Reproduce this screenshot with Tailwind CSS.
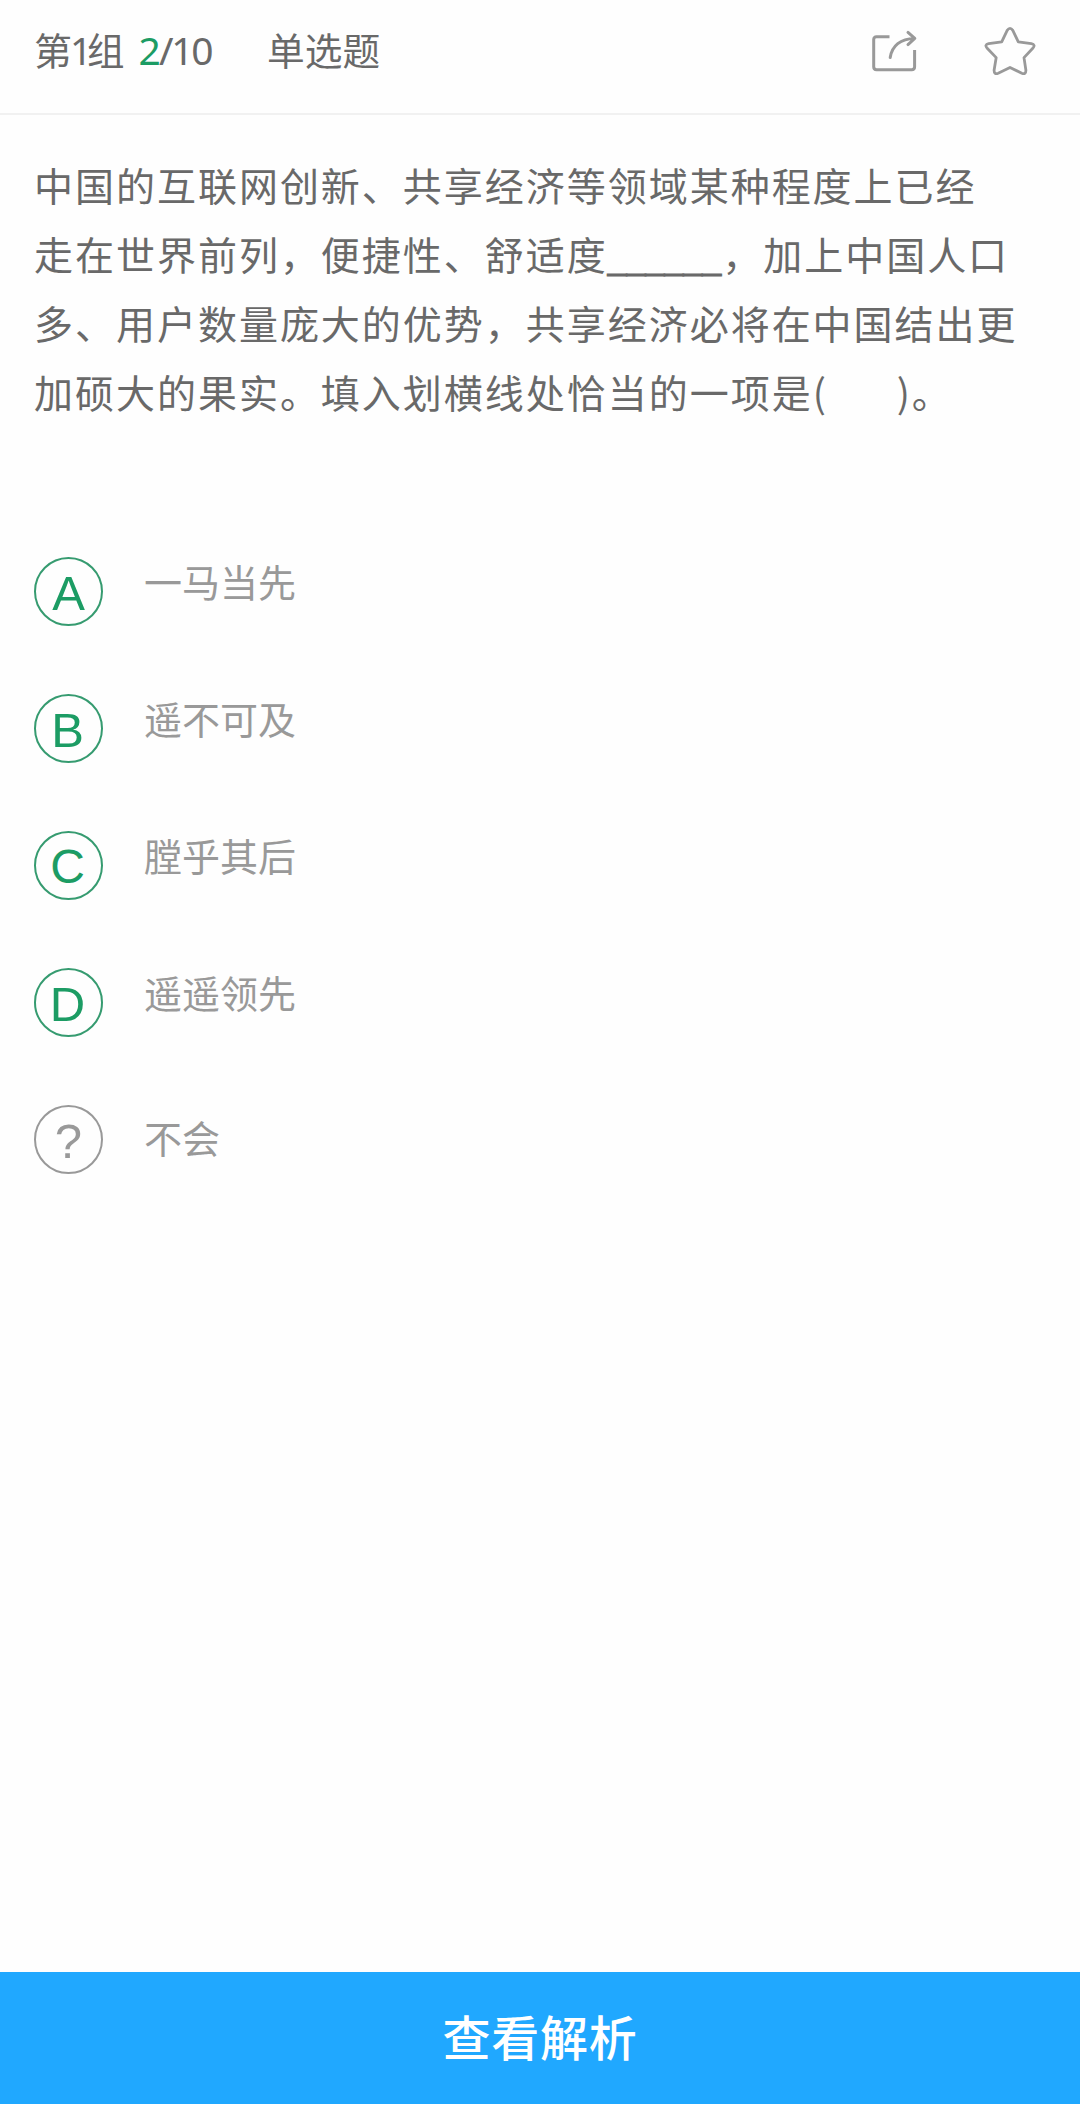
<!DOCTYPE html>
<html lang="zh-CN">
<head>
<meta charset="utf-8">
<title>单选题</title>
<script src="https://cdn.jsdelivr.net/npm/@tailwindcss/browser@4"></script>
</head>
<body class="bg-[#fefefe]">
<div class="flex h-[2104px] w-[1080px] flex-col font-['Noto_Sans_CJK_SC',sans-serif] text-[38px] text-[#696969]">
  <header class="flex h-[115px] shrink-0 items-start border-b-2 border-[#f1f1f1] pl-[34px] leading-[56px]">
    <div class="flex w-[233px] pt-[21px] whitespace-nowrap">
      <span class="w-[36px]">第</span><span class="w-[17px] pt-[1px] font-['Noto_Sans',sans-serif] text-[38.5px] tracking-[-6px]">1</span><span class="w-[51.5px] text-[37.5px]">组</span><span class="flex pt-[1px] font-['Noto_Sans',sans-serif] text-[39px] tracking-[-2.3px]"><span class="w-[20.5px] text-[#1c9c64]">2</span>/10</span>
    </div>
    <div class="w-[603px] pt-[21px] text-[37.7px]">单选题</div>
    <svg class="mt-[28px] size-[48px]" viewBox="0 0 48 48" fill="none" stroke="#999" stroke-width="3" stroke-linecap="round" stroke-linejoin="round">
      <path stroke-linecap="butt" d="M19.5 8.8H6.5Q3.7 8.8 3.7 11.6V38.8Q3.7 41.7 6.5 41.7H41.8Q44.6 41.7 44.6 38.8V22"/>
      <path d="M20.2 29.5C22 18 30.5 10.5 44.5 10.4M38 4.4L44.8 10.4L38 16.6"/>
    </svg>
    <svg class="mt-[24px] ml-[64px] size-[56px]" viewBox="0 0 56 56" fill="none" stroke="#999" stroke-width="2.8" stroke-linejoin="round">
      <path d="M25.2 6.4Q28 2.4 30.8 6.4L36.3 17.9L49.3 19.7Q54 20.8 50.8 24.2L42 33.6L43.9 46.3Q43.9 51 39.8 49.2L28 43.5L16.2 49.2Q12.1 51 12.1 46.3L14.2 33.6L5.2 24.2Q2 20.8 6.7 19.7L19.7 17.9Z"/>
    </svg>
  </header>
  <main class="flex flex-1 flex-col">
    <div class="pt-[35px] pl-[34px] text-[39px] leading-[69px] tracking-[1.98px] whitespace-nowrap">
      <p>中国的互联网创新、共享经济等领域某种程度上已经</p>
      <p class="flex h-[69px]"><span>走在世界前列，便捷性、舒适度</span><span class="w-[114.5px] pt-[4px] font-['Liberation_Sans',sans-serif] text-[34px] tracking-normal [-webkit-text-stroke:1px_#696969]">______</span><span>，加上中国人口</span></p>
      <p>多、用户数量庞大的优势，共享经济必将在中国结出更</p>
      <p class="flex"><span>加硕大的果实。填入划横线处恰当的一项是</span><span class="w-[84px]">(</span><span class="w-[15px]">)</span><span>。</span></p>
    </div>
    <ul class="flex flex-col gap-[68px] pt-[131px] pl-[34px] leading-[56px] text-[#999]">
      <li class="flex h-[69px] gap-[41px]"><span class="flex size-[69px] items-center justify-center rounded-full border-2 border-[#369b70] pt-[2px] font-['Liberation_Sans',sans-serif] text-[49px] text-[#1c9c64]">A</span><span class="-mt-[4px]">一马当先</span></li>
      <li class="flex h-[69px] gap-[41px]"><span class="flex size-[69px] items-center justify-center rounded-full border-2 border-[#369b70] pt-[2px] pr-[2px] font-['Liberation_Sans',sans-serif] text-[49px] text-[#1c9c64]">B</span><span class="-mt-[4px]">遥不可及</span></li>
      <li class="flex h-[69px] gap-[41px]"><span class="flex size-[69px] items-center justify-center rounded-full border-2 border-[#369b70] pt-[2px] pr-[2px] font-['Liberation_Sans',sans-serif] text-[48px] text-[#1c9c64]">C</span><span class="-mt-[4px]">膛乎其后</span></li>
      <li class="flex h-[69px] gap-[41px]"><span class="flex size-[69px] items-center justify-center rounded-full border-2 border-[#369b70] pt-[2px] pr-[2px] font-['Liberation_Sans',sans-serif] text-[49px] text-[#1c9c64]">D</span><span class="-mt-[4px]">遥遥领先</span></li>
      <li class="flex h-[69px] gap-[41px]"><span class="flex size-[69px] items-center justify-center rounded-full border-2 border-[#999] pt-[3px] font-['Liberation_Sans',sans-serif] text-[49px]">?</span><span class="pt-[4px]">不会</span></li>
    </ul>
  </main>
  <button class="flex h-[132px] shrink-0 items-center justify-center bg-[#20a8ff] pb-[6px] text-[48px] font-medium tracking-[0.7px] text-white">查看解析</button>
</div>
</body>
</html>
